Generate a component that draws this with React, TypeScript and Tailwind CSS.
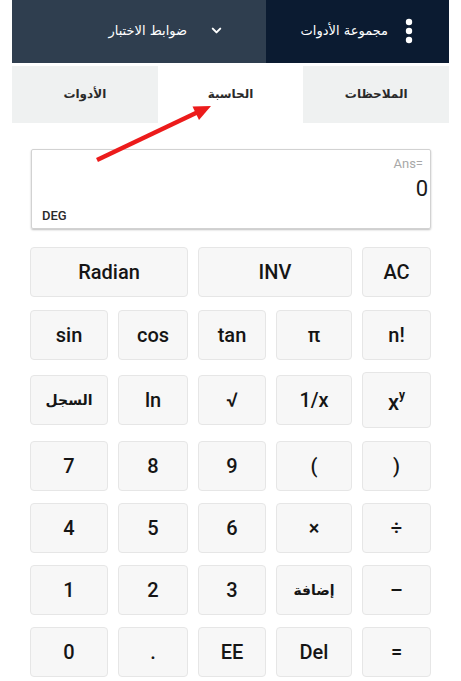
import { ChevronDown } from 'lucide-react';

const arabic = "font-['DejaVu_Sans','Noto_Sans',sans-serif]";

type Key = { label: React.ReactNode; span?: string; arabic?: boolean; big?: boolean };

const rows: { mt: string; keys: Key[] }[] = [
  {
    mt: 'mt-[18px]',
    keys: [
      { label: 'Radian', span: 'col-span-2' },
      { label: 'INV', span: 'col-span-2' },
      { label: 'AC' },
    ],
  },
  { mt: 'mt-[13px]', keys: [{ label: 'sin' }, { label: 'cos' }, { label: 'tan' }, { label: 'π' }, { label: 'n!' }] },
  {
    mt: 'mt-[15px]',
    keys: [
      { label: 'السجل', arabic: true },
      { label: 'ln' },
      { label: '√' },
      { label: '1/x' },
      {
        label: (
          <span className="text-[22px] pt-[4px]">
            x<sup className="relative -top-[11px] text-[12px] font-bold">y</sup>
          </span>
        ),
        big: true,
      },
    ],
  },
  { mt: 'mt-[16px]', keys: [{ label: '7' }, { label: '8' }, { label: '9' }, { label: '(' }, { label: ')' }] },
  { mt: 'mt-[12px]', keys: [{ label: '4' }, { label: '5' }, { label: '6' }, { label: '×' }, { label: '÷' }] },
  { mt: 'mt-[12px]', keys: [{ label: '1' }, { label: '2' }, { label: '3' }, { label: 'إضافة', arabic: true }, { label: '–' }] },
  { mt: 'mt-[12px]', keys: [{ label: '0' }, { label: '.' }, { label: 'EE' }, { label: 'Del' }, { label: '=' }] },
];

function CalcKey({ k }: { k: Key }) {
  return (
    <button
      className={`${k.span ?? ''} ${k.big ? '-my-[3px] h-[56px]' : 'h-[50px]'} flex items-center justify-center rounded-[4px] border border-[#e6e6e6] bg-[#f7f7f7] text-[#151515] ${
        k.arabic ? `${arabic} text-[14px] font-bold` : 'text-[20px] font-medium'
      }`}
    >
      {k.label}
    </button>
  );
}

export default function App() {
  return (
    <div className="relative h-[681px] w-[461px] overflow-hidden bg-white font-['Roboto',sans-serif]">
      {/* top bar */}
      <div className="mx-3 flex h-[63px]">
        <div className="flex flex-1 items-center justify-end gap-[22px] bg-[#2f3e4f] pr-[42px] pb-[2px]">
          <span dir="rtl" className={`${arabic} text-[13px] text-white`}>
            ضوابط الاختبار
          </span>
          <ChevronDown size={15} strokeWidth={3.2} className="text-white" />
        </div>
        <div className="flex w-[183px] items-center justify-end gap-[17px] bg-[#0b1b31] pr-[36px] pb-[2px]">
          <span dir="rtl" className={`${arabic} text-[13px] text-white`}>
            مجموعة الأدوات
          </span>
          <svg width="8" height="26" viewBox="0 0 8 26">
            <circle cx="4" cy="4" r="3.2" fill="white" />
            <circle cx="4" cy="13" r="3.2" fill="white" />
            <circle cx="4" cy="22" r="3.2" fill="white" />
          </svg>
        </div>
      </div>

      {/* tabs */}
      <div className={`mx-3 mt-[3px] grid h-[57px] grid-cols-3 ${arabic} text-[12px] font-bold text-[#2a2a2a]`}>
        <div dir="rtl" className="flex items-center justify-center bg-[#eff1f1] pb-[2px]">الأدوات</div>
        <div dir="rtl" className="flex items-center justify-center bg-white pb-[2px]">الحاسبة</div>
        <div dir="rtl" className="flex items-center justify-center bg-[#eff1f1] pb-[2px]">الملاحظات</div>
      </div>

      {/* display */}
      <div className="mt-[26px] ml-[31px] mr-[30px] flex h-[80px] flex-col rounded-[2px] border border-[#d2d2d2] shadow-[0_1px_2px_rgba(0,0,0,0.25)]">
        <div className="mt-[6px] mr-[7px] text-right text-[13px] leading-[16px] text-[#a8a8a8]">Ans=</div>
        <div className="mt-[5px] mr-[2px] text-right text-[22px] leading-[24px] text-[#1a1a1a]">0</div>
        <div className="mt-auto mb-[5px] ml-[10px] text-[13px] font-medium leading-[15px] text-[#2a2a2a]">DEG</div>
      </div>

      {/* keypad */}
      <div className="ml-[30px]">
        {rows.map((r, i) => (
          <div key={i} className={`${r.mt} grid grid-cols-[78px_70px_68px_76px_69px] items-center gap-x-[10px]`}>
            {r.keys.map((k, j) => (
              <CalcKey key={j} k={k} />
            ))}
          </div>
        ))}
      </div>

      {/* red arrow annotation */}
      <svg className="pointer-events-none absolute left-0 top-0" width="461" height="681">
        <line x1="97" y1="160" x2="198" y2="112" stroke="#ec1b1b" strokeWidth="4.5" />
        <polygon points="211,106 192.5,106.5 199,120" fill="#ec1b1b" />
      </svg>
    </div>
  );
}
